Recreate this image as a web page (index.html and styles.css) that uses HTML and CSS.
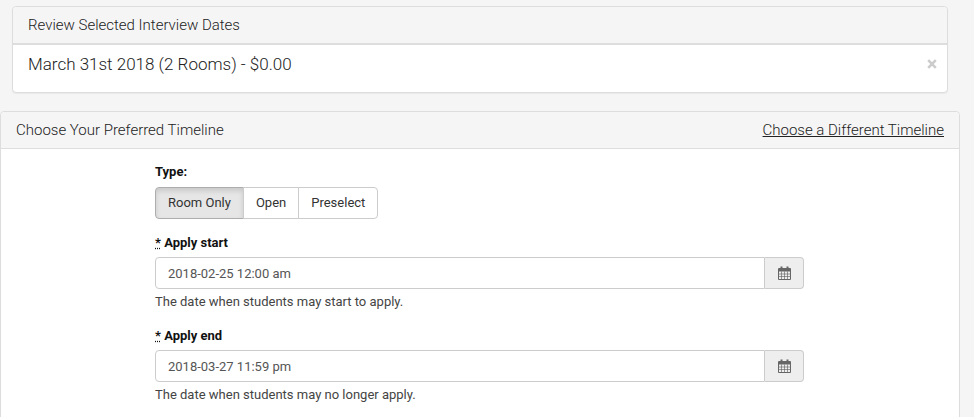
FILE: index.html
```html
<!DOCTYPE html>
<html lang="en">
<head>
    <meta charset="UTF-8">
    <title>Choose Timeline</title>
    <link rel="stylesheet" href="styles.css">
</head>
<body>
    <div class="panel review-panel">
        <div class="panel-heading review-heading">Review Selected Interview Dates</div>
        <div class="review-body">
            <span class="review-item">March 31st 2018 (2 Rooms) - $0.00</span>
            <svg class="remove" viewBox="0 0 10 10" width="10" height="10">
                <path fill="none" stroke="currentColor" stroke-width="2.6" d="M1.200 1.200l7.600 7.600M8.800 1.200l-7.600 7.600"/>
            </svg>
        </div>
    </div>

    <div class="panel timeline-panel">
        <div class="panel-heading timeline-heading">
            <span>Choose Your Preferred Timeline</span>
            <a href="#" class="heading-link">Choose a Different Timeline</a>
        </div>
        <div class="timeline-body">
            <form class="timeline-form">
                <div class="form-group type-group">
                    <label>Type:</label>
                    <div class="btn-group">
                        <button type="button" class="btn active">Room Only</button>
                        <button type="button" class="btn">Open</button>
                        <button type="button" class="btn">Preselect</button>
                    </div>
                </div>

                <div class="form-group">
                    <label><abbr title="required">*</abbr> Apply start</label>
                    <div class="input-group">
                        <input type="text" class="form-control" value="2018-02-25 12:00 am">
                        <span class="input-addon">
                            <svg class="cal-icon" width="13" height="14"><use href="#cal"></use></svg>
                        </span>
                    </div>
                    <p class="help-text">The date when students may start to apply.</p>
                </div>

                <div class="form-group">
                    <label><abbr title="required">*</abbr> Apply end</label>
                    <div class="input-group">
                        <input type="text" class="form-control" value="2018-03-27 11:59 pm">
                        <span class="input-addon">
                            <svg class="cal-icon" width="13" height="14"><use href="#cal"></use></svg>
                        </span>
                    </div>
                    <p class="help-text">The date when students may no longer apply.</p>
                </div>
            </form>
        </div>
    </div>

    <svg class="svg-defs" width="0" height="0">
        <symbol id="cal" viewBox="0 0 13 14">
            <path fill="none" stroke="currentColor" stroke-opacity="0.65" d="M3.500 5.500v8M6.500 5.500v8M9.500 5.500v8M.5 8h12M.5 10.500h12"/>
            <path fill="none" stroke="currentColor" d="M.5 2.500h12v11H.5z"/>
            <path fill="currentColor" d="M1 3h11v2.500H1zM2.500 .5h2v3h-2zM8.500 .5h2v3h-2z"/>
        </symbol>
    </svg>
</body>
</html>
```

FILE: styles.css
```css
html, body {
    height: 100%;
    overflow: hidden;
}

body {
    margin: 0;
    padding-top: 6px;
    box-sizing: border-box;
    background-color: #f5f5f5;
    font-family: Roboto, "Liberation Sans", sans-serif;
    font-size: 13px;
    color: #333;
}

.panel {
    background-color: #fff;
    border: 1px solid #ddd;
    border-radius: 4px;
}

.panel-heading {
    background-color: #f5f5f5;
    font-size: 15px;
    font-weight: 300;
    color: #222;
}

.review-panel {
    margin: 0 26px 18px 12px;
    height: 87px;
    box-sizing: border-box;
    box-shadow: 0 1px 1px rgba(0, 0, 0, 0.05);
}

.review-heading {
    height: 36px;
    line-height: 36px;
    padding: 0 15px;
    border-bottom: 2px solid #ddd;
    border-radius: 4px 4px 0 0;
}

.review-body {
    display: flex;
    justify-content: space-between;
    align-items: center;
    padding: 7px 10px 9px 15px;
}

.review-item {
    font-size: 17px;
    font-weight: 300;
    line-height: 24px;
    color: #222;
}

.remove {
    color: #ccc;
}

.timeline-panel {
    margin-right: 14px;
    height: 400px;
}

.timeline-heading {
    display: flex;
    justify-content: space-between;
    height: 36px;
    line-height: 36px;
    padding: 0 15px;
    border-bottom: 1px solid #ddd;
    border-radius: 4px 4px 0 0;
}

.heading-link {
    color: #222;
}

.timeline-form {
    width: 649px;
    margin-left: 154px;
    padding-top: 16px;
}

.form-group {
    margin-bottom: 19px;
}

.form-group label {
    display: block;
    margin-bottom: 7px;
    font-size: 13px;
    line-height: 14px;
    font-weight: 700;
    color: #111;
}

.type-group {
    margin-bottom: 17px;
}

.type-group label {
    margin-bottom: 8px;
}

abbr {
    text-decoration: underline dotted;
}

.btn-group {
    display: flex;
}

.btn {
    height: 32px;
    margin-left: -1px;
    padding: 0 12px 2px;
    background-color: #fff;
    border: 1px solid #ccc;
    font-family: inherit;
    font-size: 13px;
    color: #333;
}

.btn:first-child {
    margin-left: 0;
    border-radius: 4px 0 0 4px;
}

.btn:last-child {
    border-radius: 0 4px 4px 0;
}

.btn.active {
    background-color: #e6e6e6;
    border-color: #adadad;
    box-shadow: inset 0 3px 5px rgba(0, 0, 0, 0.125);
}

.input-group {
    display: flex;
    height: 32px;
}

.form-control {
    flex: 1;
    min-width: 0;
    padding: 0 12px;
    background-color: #fff;
    border: 1px solid #ccc;
    border-radius: 4px 0 0 4px;
    font-family: inherit;
    font-size: 13px;
    color: #555;
}

.input-addon {
    display: flex;
    align-items: center;
    justify-content: center;
    width: 38px;
    background-color: #eee;
    border: 1px solid #ccc;
    border-left: none;
    border-radius: 0 4px 4px 0;
    color: #666;
}

.help-text {
    margin: 5px 0 0;
    font-size: 13px;
    line-height: 16px;
    color: #444;
}

.svg-defs {
    position: absolute;
}
```
